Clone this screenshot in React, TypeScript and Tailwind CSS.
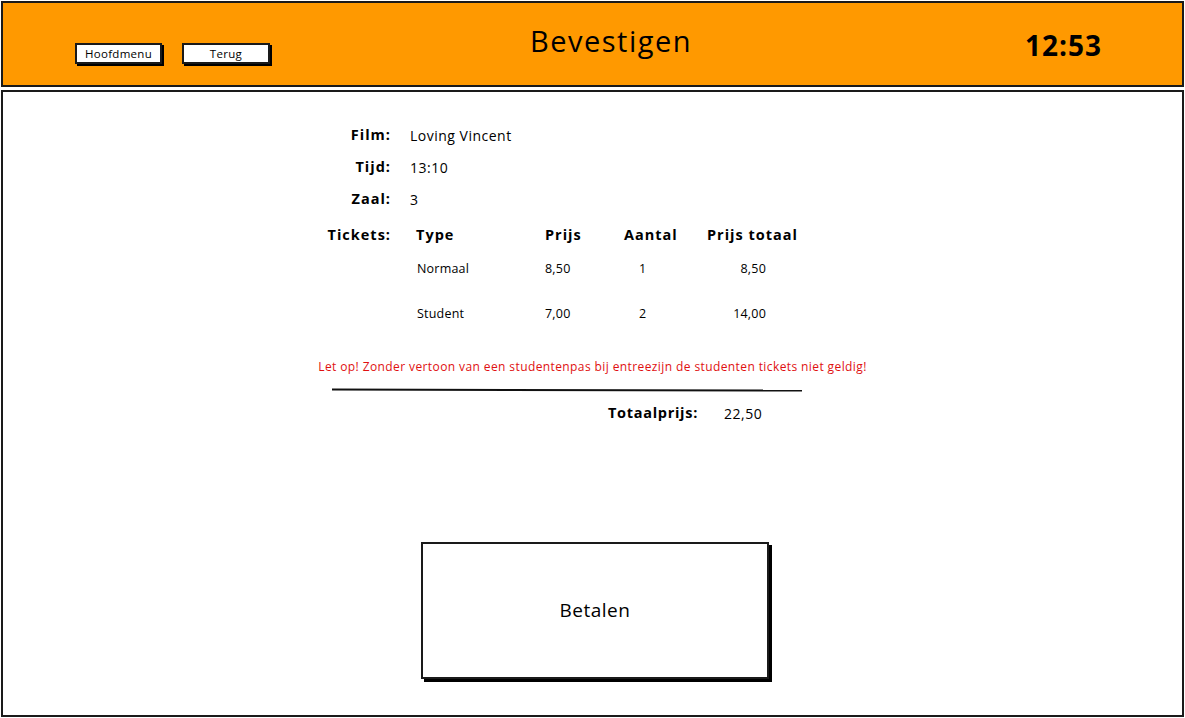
import type { ReactNode } from 'react'

const font = { fontFamily: '"Open Sans", "Noto Sans", sans-serif' }

const tickets = [
  { type: 'Normaal', prijs: '8,50', aantal: '1', totaal: '8,50', h: 'h-[28px]' },
  { type: 'Student', prijs: '7,00', aantal: '2', totaal: '14,00', h: 'h-[62px]' },
]

function SmallButton({ children, className }: { children: ReactNode; className?: string }) {
  return (
    <button
      type="button"
      className={`mt-[40px] flex h-[21px] items-center justify-center border-2 border-[#1a1a1a] bg-white text-[11.5px] leading-none text-black shadow-[2px_2px_0_#000] ${className ?? ''}`}
    >
      {children}
    </button>
  )
}

function InfoRow({ label, value }: { label: string; value: string }) {
  return (
    <div className="flex h-[32px] items-center">
      <span className="w-[77px] text-right text-[14.5px] font-bold tracking-[1px]">{label}</span>
      <span className="ml-[19px] text-[14px] tracking-[0.5px]">{value}</span>
    </div>
  )
}

export default function App() {
  return (
    <div
      style={font}
      className="flex h-[718px] w-[1185px] flex-col gap-[3px] bg-white p-[1px] text-black"
    >
      <header className="flex h-[86px] shrink-0 items-start border-2 border-[#1a1a1a] bg-[#ff9900]">
        <SmallButton className="ml-[72px] w-[87px] tracking-[0.3px]">Hoofdmenu</SmallButton>
        <SmallButton className="ml-[20px] w-[88px] tracking-[0.3px]">Terug</SmallButton>
        <h1 className="ml-[260px] mt-[20px] text-[29px] leading-[36px] font-normal tracking-[1.5px]">
          Bevestigen
        </h1>
        <div className="ml-auto mr-[80px] mt-[24px] text-[28px] leading-[36px] font-bold tracking-[1px]">
          12:53
        </div>
      </header>

      <main className="flex flex-1 flex-col border-2 border-[#1a1a1a] pt-[27px]">
        <div className="ml-[311px] flex flex-col">
          <InfoRow label="Film:" value="Loving Vincent" />
          <InfoRow label="Tijd:" value="13:10" />
          <InfoRow label="Zaal:" value="3" />

          <div className="flex">
            <span className="flex h-[40px] w-[77px] items-center justify-end text-[14.5px] font-bold tracking-[1px]">
              Tickets:
            </span>
            <div className="ml-[25px] flex flex-col">
              <div className="grid h-[40px] grid-cols-[129px_79px_83px_95px] items-center text-[14.5px] font-bold tracking-[1px] whitespace-nowrap">
                <span>Type</span>
                <span>Prijs</span>
                <span>Aantal</span>
                <span>Prijs totaal</span>
              </div>
              {tickets.map((t) => (
                <div
                  key={t.type}
                  className={`grid ${t.h} grid-cols-[129px_79px_83px_95px] items-center text-[12.5px] tracking-[0.2px]`}
                >
                  <span className="pl-[1px]">{t.type}</span>
                  <span>{t.prijs}</span>
                  <span className="pl-[15px]">{t.aantal}</span>
                  <span className="pr-[36px] text-right">{t.totaal}</span>
                </div>
              ))}
            </div>
          </div>
        </div>

        <p className="flex h-[44px] items-center justify-center text-[12px] tracking-[0.4px] text-[#e01010]">
          Let op! Zonder vertoon van een studentenpas bij entreezijn de studenten tickets niet geldig!
        </p>

        <div className="ml-[329px] h-[2px] w-[470px] rotate-[0.12deg] bg-[#111]" />

        <div className="ml-[605px] flex h-[44px] items-center">
          <span className="w-[116px] text-[14.5px] font-bold tracking-[0.7px] whitespace-nowrap">
            Totaalprijs:
          </span>
          <span className="text-[14px] tracking-[0.5px]">22,50</span>
        </div>

        <button
          type="button"
          className="ml-[418px] mt-[107px] flex h-[137px] w-[348px] items-center justify-center border-2 border-[#1a1a1a] bg-white text-[19px] tracking-[0.5px] shadow-[3px_3px_0_#000]"
        >
          Betalen
        </button>
      </main>
    </div>
  )
}
